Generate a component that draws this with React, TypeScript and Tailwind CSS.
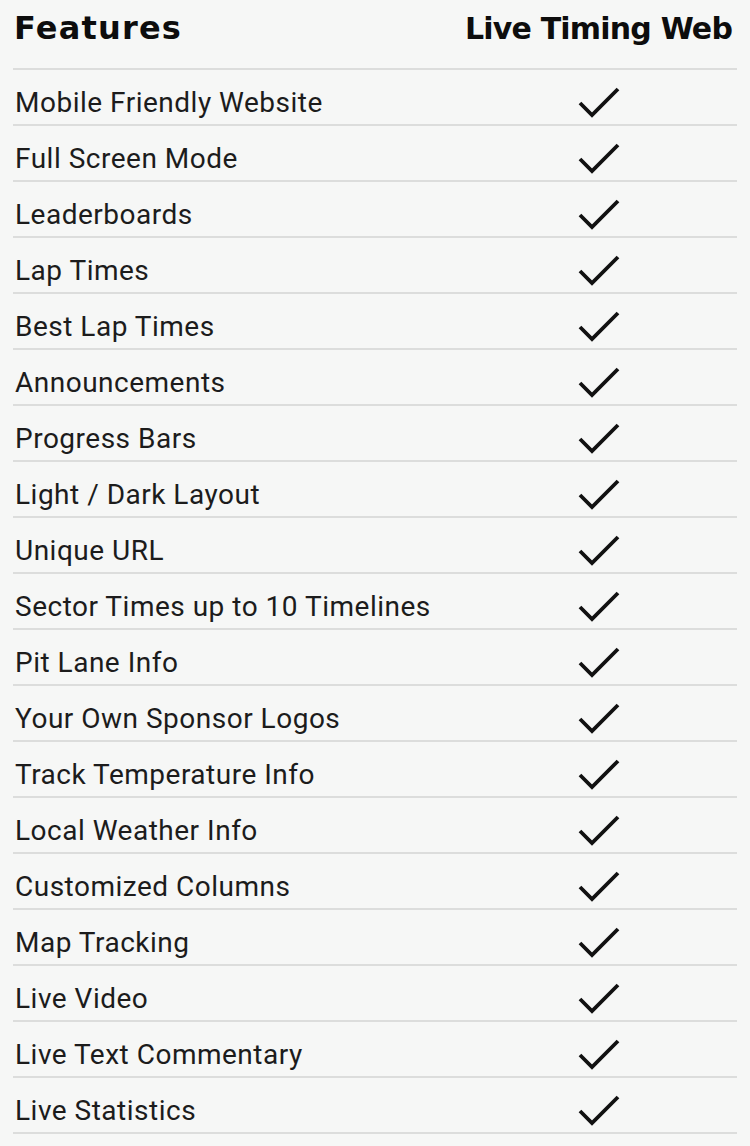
const features = [
  "Mobile Friendly Website",
  "Full Screen Mode",
  "Leaderboards",
  "Lap Times",
  "Best Lap Times",
  "Announcements",
  "Progress Bars",
  "Light / Dark Layout",
  "Unique URL",
  "Sector Times up to 10 Timelines",
  "Pit Lane Info",
  "Your Own Sponsor Logos",
  "Track Temperature Info",
  "Local Weather Info",
  "Customized Columns",
  "Map Tracking",
  "Live Video",
  "Live Text Commentary",
  "Live Statistics",
];

function Check() {
  return (
    <svg width="42" height="32" viewBox="0 0 42 32" fill="none">
      <polyline points="2,16 14,28 40,2" stroke="#111" strokeWidth="3.8" strokeLinejoin="miter" />
    </svg>
  );
}

export default function App() {
  return (
    <div className="min-h-[1146px] w-[750px] bg-[#f6f7f6] px-[13px] font-['Roboto',sans-serif] text-[#1c1c1c]">
      {/* Header */}
      <div className="flex h-[70px] items-center justify-between border-b-2 border-[#dcdddc] pb-[12px] font-['DejaVu_Sans',sans-serif] font-bold text-[#0d0d0d]">
        <h1 className="pl-[1px] text-[32px] tracking-[1.2px]">Features</h1>
        <div className="w-[277px] text-center text-[30px] tracking-[-0.8px]">Live Timing Web</div>
      </div>

      {features.map((f) => (
        <div key={f} className="flex h-[56px] items-center justify-between border-b-2 border-[#dcdddc] pt-[12px]">
          <span className="pl-[2px] text-[28px] tracking-[0.5px]">{f}</span>
          <div className="flex w-[277px] justify-center">
            <Check />
          </div>
        </div>
      ))}
    </div>
  );
}
